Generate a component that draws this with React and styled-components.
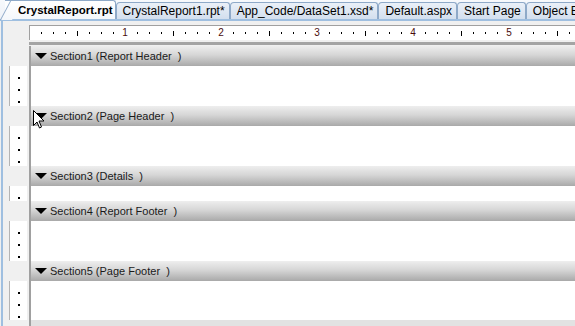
import React from 'react';
import styled, { createGlobalStyle } from 'styled-components';

const Global = createGlobalStyle`
	html, body {
		margin: 0;
		padding: 0;
		background: #f0f0f0;
		overflow: hidden;
	}
	body {
		font-family: 'Liberation Sans', Arial, sans-serif;
	}
`;

const Window = styled.div`
	width: 575px;
	height: 326px;
	position: relative;
	overflow: hidden;
	display: flex;
	flex-direction: column;
	background: #f0f0f0;
`;

const TabStrip = styled.div`
	height: 19px;
	display: flex;
	align-items: flex-end;
	background: linear-gradient(#f7f9fc, #eef2f8);
	border-bottom: 2px solid #9fbfe0;
	white-space: nowrap;
`;

const Tab = styled.div`
	position: relative;
	height: ${(p) => (p.active ? '19px' : '17px')};
	box-sizing: border-box;
	padding: ${(p) => (p.active ? '0 2px 0 13px' : '0 4px 0 6px')};
	margin-left: ${(p) => (p.active ? '5px' : '0')};
	display: flex;
	align-items: center;
	font-size: ${(p) => (p.active ? '11.5px' : '12px')};
	font-weight: ${(p) => (p.active ? 700 : 400)};
	color: #000;
	background: ${(p) =>
		p.active ? 'linear-gradient(#ffffff, #f4f7fb)' : 'linear-gradient(#eaf0f8, #d3dfee)'};
	border: 1px solid #8ea9c8;
	border-bottom: none;
	border-left: ${(p) => (p.active ? 'none' : '1px solid #8ea9c8')};
	border-radius: ${(p) => (p.active ? '0 3px 0 0' : '4px 3px 0 0')};
	z-index: ${(p) => (p.active ? 2 : 1)};
	flex-shrink: 0;

	&::before {
		content: '';
		display: ${(p) => (p.active ? 'block' : 'none')};
		position: absolute;
		left: -5px;
		top: 0;
		width: 11px;
		height: 19px;
		background: linear-gradient(#ffffff, #f4f7fb);
		border-left: 1px solid #8ea9c8;
		transform: skewX(-28deg);
		transform-origin: bottom left;
	}
`;

const Body = styled.div`
	flex: 1;
	display: flex;
	border-left: 1px solid #9fbfe0;
	margin-left: 1px;
`;

const InnerEdge = styled.div`
	width: 1px;
	background: #f4f8fc;
	border-right: 1px solid #9fbfe0;
`;

const Editor = styled.div`
	flex: 1;
	display: flex;
	flex-direction: column;
	padding-top: 4px;
`;

const RulerRow = styled.div`
	display: flex;
	padding-left: 26px;
	height: 17px;
`;

const Ruler = styled.div`
	flex: 1;
	height: 14px;
	background: #fff;
	border-top: 1px solid #a0a0a0;
	border-left: 1px solid #a0a0a0;
	display: flex;
	padding-left: 5px;
	overflow: hidden;
`;

const TickCell = styled.div`
	width: 12px;
	flex-shrink: 0;
	display: flex;
	justify-content: center;
	align-items: center;
	font-size: 10px;
	color: #4a0c0c;
	line-height: 1;
`;

const Tick = styled.div`
	width: 1px;
	height: ${(p) => (p.tall ? '5px' : '2px')};
	background: #000;
`;

const Row = styled.div`
	display: flex;
	height: ${(p) => p.h}px;
	flex-shrink: 0;
`;

const Gutter = styled.div`
	width: 26px;
	flex-shrink: 0;
	display: flex;
	padding-left: 6px;
	box-sizing: border-box;
`;

const SideRuler = styled.div`
	width: 18px;
	background: #fff;
	border-left: 1px solid #b4b4b4;
	box-sizing: border-box;
	display: flex;
	flex-direction: column;
	align-items: center;
	padding-top: 11px;
	gap: 10px;
`;

const Dash = styled.div`
	width: 2px;
	height: 2px;
	background: #000;
`;

const Content = styled.div`
	flex: 1;
	border-left: 2px solid #a0a0a0;
	background: ${(p) => (p.bar ? 'linear-gradient(#eeeeee, #d6d6d6 45%, #a9a9a9)' : '#fff')};
	display: flex;
	align-items: center;
	padding-left: 4px;
	font-size: 11px;
	color: #1a1a1a;
	white-space: pre;
`;

const TopLine = styled.div`
	margin-left: 26px;
	height: 3px;
	background: #a4a4a4;
	margin-bottom: 1px;
`;

const Arrow = styled.span`
	width: 0;
	height: 0;
	border-left: 6px solid transparent;
	border-right: 6px solid transparent;
	border-top: 6px solid #000;
	margin-right: 3px;
`;

const Bottom = styled.div`
	flex: 1;
	display: flex;
`;

const BottomBar = styled.div`
	flex: 1;
	border-left: 2px solid #a0a0a0;
	background: #e2e2e2;
`;

const Cursor = styled.svg`
	position: absolute;
	left: 33px;
	top: 110px;
	pointer-events: none;
`;

const tabs = [
	'CrystalReport1.rpt*',
	'App_Code/DataSet1.xsd*',
	'Default.aspx',
	'Start Page',
	'Object Browser',
];

const sections = [
	{ label: 'Section1 (Report Header  )', body: 40, dashes: 3 },
	{ label: 'Section2 (Page Header  )', body: 40, dashes: 3 },
	{ label: 'Section3 (Details  )', body: 15, dashes: 1 },
	{ label: 'Section4 (Report Footer  )', body: 40, dashes: 3 },
	{ label: 'Section5 (Page Footer  )', body: 39, dashes: 3 },
];

function RulerTicks() {
	const cells = [];
	for (let k = 1; k <= 46; k++) {
		let inner;
		if (k % 8 === 0) inner = k / 8;
		else if (k % 4 === 0) inner = <Tick tall />;
		else inner = <Tick />;
		cells.push(<TickCell key={k}>{inner}</TickCell>);
	}
	return cells;
}

export default function App() {
	return (
		<Window>
			<Global />
			<TabStrip>
				<Tab active>CrystalReport.rpt</Tab>
				{tabs.map((t) => (
					<Tab key={t}>{t}</Tab>
				))}
			</TabStrip>
			<Body>
				<InnerEdge />
				<Editor>
					<RulerRow>
						<Ruler>
							<RulerTicks />
						</Ruler>
					</RulerRow>
					<TopLine />
					{sections.map((s) => (
						<React.Fragment key={s.label}>
							<Row h={20}>
								<Gutter />
								<Content bar>
									<Arrow />
									{s.label}
								</Content>
							</Row>
							<Row h={s.body}>
								<Gutter>
									<SideRuler>
										{Array.from({ length: s.dashes }).map((_, i) => (
											<Dash key={i} />
										))}
									</SideRuler>
								</Gutter>
								<Content />
							</Row>
						</React.Fragment>
					))}
					<Bottom>
						<Gutter />
						<BottomBar />
					</Bottom>
				</Editor>
			</Body>
			<Cursor width="12" height="19" viewBox="0 0 12 19">
				<path d="M0.5 0.5 L0.5 15.5 L4 12 L6.5 18 L8.5 17 L6 11 L11 11 Z" fill="#fff" stroke="#000" strokeWidth="1" />
			</Cursor>
		</Window>
	);
}
